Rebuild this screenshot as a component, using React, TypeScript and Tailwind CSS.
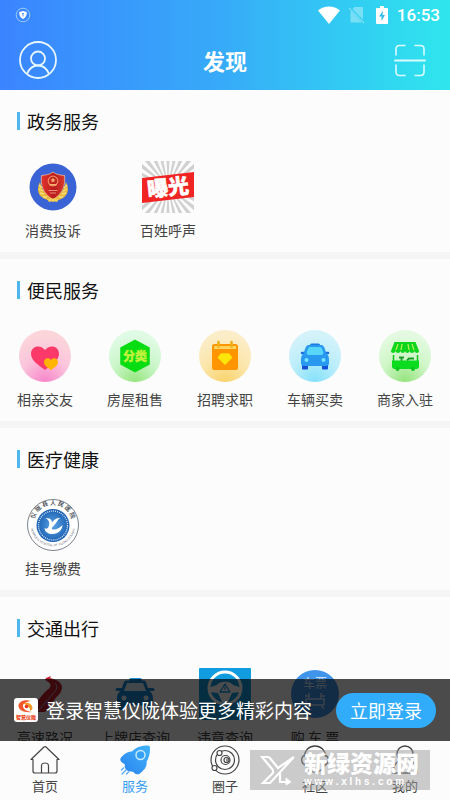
import React, { useState } from 'react';

type TabId = 'home' | 'service' | 'circle' | 'community' | 'mine';

interface Service {
  label: string;
  icon: React.FC;
}

interface Section {
  title: string;
  layout: 'wide' | 'grid';
  items: Service[];
}

const BadgeIcon: React.FC = () => (
  <svg viewBox="0 0 52 52" className="size-[52px]" aria-hidden="true">
    <defs>
      <linearGradient id="shield" x1="0" x2="1">
        <stop offset="0" stopColor="#e2322c" />
        <stop offset="0.55" stopColor="#b81d1c" />
        <stop offset="1" stopColor="#d93a2f" />
      </linearGradient>
    </defs>
    <circle cx="26" cy="26" r="23.5" fill="#3a63d6" />
    <path d="M13 21c-3 6-3 12 3 16 3 2 7 2 10 4 3-2 7-2 10-4 6-4 6-10 3-16-2 8-5 12-13 15-8-3-11-7-13-15z" fill="#e8b93c" />
    <path d="M12 24l3 3M12 28l4 2M13 32l4 1M16 36h4M40 24l-3 3M40 28l-4 2M39 32l-4 1M36 36h-4" stroke="#f8df7a" strokeWidth="1.3" />
    <path d="M26 11c3 2.500 7 3 11.500 3.500 1 9-1 18-11.500 24-10.500-6-12.500-15-11.500-24C19 14 23 13.500 26 11z" fill="url(#shield)" stroke="#f0c9a0" strokeWidth="0.7" />
    <circle cx="26" cy="20" r="4.8" fill="none" stroke="#f08a60" strokeWidth="1.2" />
    <path d="M26 16.500l.8 1.700 1.800.2-1.300 1.200.3 1.800-1.600-.9-1.600.9.300-1.800-1.300-1.200 1.800-.2zM22.500 23h7v1.500h-7z" fill="#f7b070" />
    <path d="M21.500 29.500h9M23 32h6" stroke="#ee9a80" strokeWidth="0.9" />
    <path d="M20 38q6-1 12 0l-2 3q-4-1.500-8 0z" fill="#f3cf55" />
  </svg>
);

const rays = Array.from({ length: 28 }, (_, i) => (i * 360) / 28);

const ExposureIcon: React.FC = () => (
  <svg viewBox="0 0 52 52" className="size-[52px]" aria-hidden="true">
    <defs>
      <clipPath id="rayBox">
        <rect width="52" height="52" rx="3" />
      </clipPath>
    </defs>
    <g clipPath="url(#rayBox)" fill="#d0d0d0">
      {rays.map((angle) => (
        <path key={angle} d="M26 26L23.8 -14h4.4z" transform={`rotate(${angle} 26 26)`} />
      ))}
    </g>
    <path d="M0 17L52 11v25L0 42z" fill="#f02523" />
    <text
      x="26"
      y="34"
      textAnchor="middle"
      transform="rotate(-6 26 26)"
      className="font-['Noto_Sans_CJK_SC',sans-serif] text-[21px] font-black"
      fill="#fff"
      stroke="#fff"
      strokeWidth="0.5"
    >
      曝光
    </text>
  </svg>
);

const HeartIcon: React.FC = () => (
  <svg viewBox="0 0 52 52" className="size-[52px]" aria-hidden="true">
    <defs>
      <radialGradient id="pink" cx="0.5" cy="1" r="0.9">
        <stop offset="0" stopColor="#f685ca" />
        <stop offset="0.55" stopColor="#fbc5dc" />
        <stop offset="1" stopColor="#fbd5da" />
      </radialGradient>
    </defs>
    <circle cx="26" cy="26" r="26" fill="url(#pink)" />
    <path d="M26 40C19 35 12 30 12 24c0-8 9-10 14-4 5-6 14-4 14 4 0 6-7 11-14 16z" fill="#fb3a69" />
    <path d="M32 40c-4-2.500-7-5-7-8 0-4 5-5 7-2 2-3 7-2 7 2 0 3-3 5.500-7 8z" fill="#ffb400" />
  </svg>
);

const CategoryIcon: React.FC = () => (
  <svg viewBox="0 0 52 52" className="size-[52px]" aria-hidden="true">
    <defs>
      <radialGradient id="mint" cx="0.5" cy="1" r="0.9">
        <stop offset="0" stopColor="#96e57e" />
        <stop offset="0.55" stopColor="#ccf6cb" />
        <stop offset="1" stopColor="#e0fbe5" />
      </radialGradient>
    </defs>
    <circle cx="26" cy="26" r="26" fill="url(#mint)" />
    <path d="M26 10.5L40 18v16L26 41.5 12 34V18z" fill="#08dc13" stroke="#08dc13" strokeWidth="1.5" strokeLinejoin="round" />
    <text
      x="26"
      y="30.5"
      textAnchor="middle"
      className="font-['Noto_Sans_CJK_SC',sans-serif] text-[12px] font-black"
      fill="#bdf23a"
      stroke="#bdf23a"
      strokeWidth="0.4"
    >
      分类
    </text>
  </svg>
);

const JobIcon: React.FC = () => (
  <svg viewBox="0 0 52 52" className="size-[52px]" aria-hidden="true">
    <defs>
      <radialGradient id="sand" cx="0.5" cy="1" r="0.9">
        <stop offset="0" stopColor="#f9d36c" />
        <stop offset="0.55" stopColor="#fbe6ac" />
        <stop offset="1" stopColor="#fbedc8" />
      </radialGradient>
    </defs>
    <circle cx="26" cy="26" r="26" fill="url(#sand)" />
    <rect x="13" y="14" width="26" height="26" rx="2.5" fill="#ff9500" />
    <path d="M15 16h22v3H15z" fill="#ffd45c" />
    <path d="M19.500 12v4.500M32.500 12v4.500" stroke="#eeb01a" strokeWidth="2.6" strokeLinecap="round" />
    <path d="M22.500 24h7l3 3.500-6.500 6.500-6.500-6.500z" fill="#ffe60a" stroke="#ffe60a" strokeWidth="1.5" strokeLinejoin="round" />
  </svg>
);

const CarIcon: React.FC = () => (
  <svg viewBox="0 0 52 52" className="size-[52px]" aria-hidden="true">
    <defs>
      <radialGradient id="sky" cx="0.5" cy="1" r="0.9">
        <stop offset="0" stopColor="#84e1fb" />
        <stop offset="0.55" stopColor="#bceefb" />
        <stop offset="1" stopColor="#d3f2fa" />
      </radialGradient>
    </defs>
    <circle cx="26" cy="26" r="26" fill="url(#sky)" />
    <rect x="13" y="33" width="6" height="6.5" rx="1" fill="#1450d8" />
    <rect x="33" y="33" width="6" height="6.5" rx="1" fill="#1450d8" />
    <rect x="21" y="13.5" width="10" height="4" rx="1.5" fill="#1d7be0" />
    <path d="M13 23h4M35 23h4" stroke="#1d6fe0" strokeWidth="2.5" strokeLinecap="round" />
    <path d="M19.500 15h13c2 0 3.500 3 4.500 8 2.500 2 3 4 3 7v3c0 2-1 3-3 3H15c-2 0-3-1-3-3v-3c0-3 .5-5 3-7 1-5 2.500-8 4.500-8z" fill="#2899ee" />
    <path d="M21 17h10c1.200 0 2.500 2 3.200 5.200.2 1.800-.4 2.800-1.700 2.800h-13c-1.300 0-1.900-1-1.700-2.800.7-3.200 2-5.200 3.200-5.200z" fill="#58d6fa" />
    <circle cx="17.5" cy="30" r="2" fill="#75e4fc" />
    <circle cx="34.5" cy="30" r="2" fill="#75e4fc" />
  </svg>
);

const ShopIcon: React.FC = () => (
  <svg viewBox="0 0 52 52" className="size-[52px]" aria-hidden="true">
    <defs>
      <radialGradient id="leaf" cx="0.5" cy="1" r="0.9">
        <stop offset="0" stopColor="#94e37c" />
        <stop offset="0.55" stopColor="#d0f6c9" />
        <stop offset="1" stopColor="#e3fae0" />
      </radialGradient>
    </defs>
    <circle cx="26" cy="26" r="26" fill="url(#leaf)" />
    <path d="M15.500 12h21l3.500 9c0 2.500-4 2.500-4.500 0-.5 2.500-4.500 2.500-5 0-.5 2.500-4 2.500-4.500 0-.5 2.500-4 2.500-4.500 0-.5 2.500-4.500 2.500-5 0-.5 2.500-4.500 2.500-4.500 0z" fill="#0bd51c" />
    <path d="M19 14l-2 6M23 14l-1 6M29 14l1 6M33 14l2 6" stroke="#a5f04c" strokeWidth="1.4" />
    <path d="M14.500 25v6M38.500 25v6" stroke="#0bc41c" strokeWidth="1.5" />
    <path d="M20 27.500h5M22.500 28v3M28 30.500l2-2h5" stroke="#199b2c" strokeWidth="1.8" fill="none" />
    <path d="M13 30.500h27v6c0 1.500-1 2.500-2.500 2.500h-22c-1.500 0-2.500-1-2.500-2.500z" fill="#0bdc20" />
    <circle cx="18.5" cy="39" r="2" fill="#0bc41c" />
    <circle cx="34" cy="39" r="2" fill="#0bc41c" />
  </svg>
);

const HospitalIcon: React.FC = () => (
  <svg viewBox="0 0 52 52" className="size-[52px]" aria-hidden="true">
    <defs>
      <path id="ringTop" d="M7.500 29a19 19 0 1 1 37 0" />
      <path id="ringBottom" d="M3.500 29a23 23 0 0 0 45 0" />
      <radialGradient id="hospital">
        <stop offset="0" stopColor="#5aa3e6" />
        <stop offset="1" stopColor="#1b60b2" />
      </radialGradient>
    </defs>
    <circle cx="26" cy="26" r="25.5" fill="#fff" stroke="#6d7480" strokeWidth="0.9" />
    <text className="font-['Noto_Sans_CJK_SC',sans-serif] text-[6px] font-medium" fill="#343a44">
      <textPath href="#ringTop" startOffset="50%" textAnchor="middle">
        仪 陇 县 人 民 医 院
      </textPath>
    </text>
    <text className="font-['Liberation_Sans',sans-serif] text-[3px]" fill="#5a6270">
      <textPath href="#ringBottom" startOffset="50%" textAnchor="middle">
        PEOPLE'S HOSPITAL OF YILONG COUNTY
      </textPath>
    </text>
    <circle cx="26" cy="26.5" r="16.5" fill="url(#hospital)" />
    <circle cx="26" cy="26.5" r="14.5" fill="none" stroke="#d7e8f8" strokeWidth="1.3" strokeDasharray="1 1" />
    <path d="M18.500 19.500c4-1 6.500 1 6.500 4 2-3 5-5 8.500-4.500-3 1-3.500 5-8 9-1.500 1.500-.5 3 2 2.500 3-.5 5.500-2 8-4.500-.5 5.500-4.500 9-9.500 9s-8-2-8.500-6c1.500 1 3 1 4-1 .7-2 1-3.500.5-5-.5-1.700-1.500-3-3.500-3.500z" fill="#fff" />
  </svg>
);

const RoadIcon: React.FC = () => (
  <svg viewBox="0 0 52 52" className="size-[52px]" aria-hidden="true">
    <path d="M27 10l5-2-1 2c5 1 12 4 12 9 0 6-4 8-7 12L26 44H9l16-19c4-4 8-6 6-9-1-2-3-3-5-4z" fill="#c4202e" />
    <path d="M36 15c4 4 1 8-4 13L19 43" stroke="#a8a8b4" strokeWidth="1" fill="none" />
  </svg>
);

const PlateIcon: React.FC = () => (
  <svg viewBox="0 0 52 52" className="size-[52px]" aria-hidden="true">
    <rect x="20" y="10" width="13" height="5" rx="2" fill="#168bd6" />
    <path d="M17 12.500h18c2 0 3.500 5 4.500 10 3.500 2 4.500 4.500 4.500 8v7H8v-7c0-3.500 1-6 4.500-8 1-5 2.500-10 4.500-10z" fill="#168bd6" />
    <path d="M8 21.500h5M39 21.500h5" stroke="#168bd6" strokeWidth="3" strokeLinecap="round" />
    <path d="M18 15h16l3 8H15z" fill="#d9effb" />
    <circle cx="15" cy="30" r="2.5" fill="#d9effb" />
    <circle cx="37" cy="30" r="2.5" fill="#d9effb" />
    <path d="M10 37h7v5h-7zM35 37h7v5h-7z" fill="#168bd6" />
  </svg>
);

const WheelIcon: React.FC = () => (
  <svg viewBox="0 0 52 52" className="size-[52px]" aria-hidden="true">
    <rect width="52" height="52" rx="1" fill="#129ce0" />
    <circle cx="26" cy="20" r="16" fill="none" stroke="#fff" strokeWidth="3" />
    <path d="M10 20c3-2 7-2 9-4 3-3 11-3 14 0 2 2 6 2 9 4l-1 4-8 1-4 9h-6l-4-9-8-1z" fill="#fff" />
    <path d="M26 16l5 8H21z" fill="none" stroke="#129ce0" strokeWidth="1.3" strokeLinejoin="round" />
    <path d="M26 19v3" stroke="#129ce0" strokeWidth="1.2" />
  </svg>
);

const TicketIcon: React.FC = () => (
  <svg viewBox="0 0 52 52" className="size-[52px]" aria-hidden="true">
    <circle cx="26" cy="26" r="24" fill="#4095ea" />
    <text x="26" y="20" textAnchor="middle" className="font-['Noto_Sans_CJK_SC',sans-serif] text-[12px] font-medium" fill="#c4def9">
      车票
    </text>
    <path d="M17 31h18v6H17zM20 25v6M32 25v6M16 28h5M31 28h5M20 37l-3 4M32 37l3 4" fill="none" stroke="#a9cef5" strokeWidth="1.8" />
  </svg>
);

const sections: Section[] = [
  {
    title: '政务服务',
    layout: 'wide',
    items: [
      { label: '消费投诉', icon: BadgeIcon },
      { label: '百姓呼声', icon: ExposureIcon },
    ],
  },
  {
    title: '便民服务',
    layout: 'grid',
    items: [
      { label: '相亲交友', icon: HeartIcon },
      { label: '房屋租售', icon: CategoryIcon },
      { label: '招聘求职', icon: JobIcon },
      { label: '车辆买卖', icon: CarIcon },
      { label: '商家入驻', icon: ShopIcon },
    ],
  },
  {
    title: '医疗健康',
    layout: 'wide',
    items: [{ label: '挂号缴费', icon: HospitalIcon }],
  },
  {
    title: '交通出行',
    layout: 'grid',
    items: [
      { label: '高速路况', icon: RoadIcon },
      { label: '上牌店查询', icon: PlateIcon },
      { label: '违章查询', icon: WheelIcon },
      { label: '购 车 票', icon: TicketIcon },
    ],
  },
];

const HomeTab: React.FC = () => (
  <svg viewBox="0 0 30 30" className="size-[30px]" fill="none" stroke="currentColor" strokeWidth="1.2" strokeLinejoin="round" aria-hidden="true">
    <path d="M1 14.500L14 2c.7-.6 1.300-.6 2 0l13 12.500h-2V26c0 1.200-.8 2-2 2H5c-1.200 0-2-.8-2-2V14.500z" />
    <path d="M11.500 28v-7c0-4 7-4 7 0v7" />
  </svg>
);

const RocketTab: React.FC = () => (
  <svg viewBox="0 0 30 30" className="size-[30px]" aria-hidden="true">
    <defs>
      <linearGradient id="rocket" x1="0" y1="1" x2="1" y2="0">
        <stop offset="0" stopColor="#2a82ef" />
        <stop offset="1" stopColor="#41b4fa" />
      </linearGradient>
    </defs>
    <path
      d="M28 .5c1.200 0 2 .8 2 2 .3 5.500-1 10.500-3.500 14.500 1 4-2 8-6.500 11.500-1.500 1-3 1-4.500.5-1-1.200-2-2-3.500-2.500-2.500.2-4.500-.5-6-2-1.300-1.500-1.700-3-1-5C3 18.500 1 17 .5 15.500 0 14 .5 13 2 11.500 5 8 8.500 6.500 12 6.500 16 2 22 .5 28 .5z"
      fill="url(#rocket)"
    />
    <circle cx="20.5" cy="10" r="4.5" fill="#36a0f5" stroke="#c8ecff" strokeWidth="1.5" />
    <path d="M3.500 23l-2 2M6 25l-4 4M8.500 27l-2 2" stroke="#52a8f4" strokeWidth="1.3" strokeLinecap="round" />
  </svg>
);

const CircleTab: React.FC = () => (
  <svg viewBox="0 0 30 30" className="size-[30px]" fill="none" stroke="currentColor" strokeWidth="1.2" aria-hidden="true">
    <circle cx="15" cy="15" r="14" />
    <circle cx="15" cy="15" r="9.5" />
    <circle cx="15.5" cy="15" r="4.5" />
    <circle cx="16.5" cy="15" r="2.5" />
    <path d="M17 13.500v3" />
    <circle cx="9.5" cy="8" r="2.5" fill="#fcfcfc" />
    <circle cx="4.5" cy="23" r="2.5" fill="#fcfcfc" />
  </svg>
);

const CommunityTab: React.FC = () => (
  <svg viewBox="0 0 30 30" className="size-[30px]" fill="none" stroke="currentColor" strokeWidth="1.4" strokeLinecap="round" aria-hidden="true">
    <path d="M4.500 11C5 5 9 1 15 1s10 4 10.500 10" />
    <path d="M5 10c-4.500 2-4.500 8 0 10M25 10c4.500 2 4.500 8 0 10" />
    <path d="M5 20c2 4 5.500 7 10 7s8-3 10-7" />
  </svg>
);

const MineTab: React.FC = () => (
  <svg viewBox="0 0 30 30" className="size-[30px]" fill="none" stroke="currentColor" strokeWidth="1.4" strokeLinecap="round" aria-hidden="true">
    <circle cx="15" cy="9" r="8" />
    <path d="M9.500 15.500C5 18 3 22 3 28h24c0-6-2-10-6.500-12.500" />
  </svg>
);

const tabs: { id: TabId; label: string; icon: React.FC }[] = [
  { id: 'home', label: '首页', icon: HomeTab },
  { id: 'service', label: '服务', icon: RocketTab },
  { id: 'circle', label: '圈子', icon: CircleTab },
  { id: 'community', label: '社区', icon: CommunityTab },
  { id: 'mine', label: '我的', icon: MineTab },
];

const StatusBar: React.FC = () => (
  <div className="flex h-[30px] items-center justify-between pl-[15px] pr-[10px]">
    <svg viewBox="0 0 16 16" className="size-4" aria-hidden="true">
      <circle cx="8" cy="8" r="6.8" fill="none" stroke="#a3d0ff" strokeWidth="0.9" />
      <path d="M8 4l3.800 1c.2 3-.8 5.500-3.800 7-3-1.500-4-4-3.800-7z" fill="#fff" />
      <path d="M8 6v3.500M7.200 6.500h1.600" stroke="#4a93f5" strokeWidth="1" />
    </svg>
    <div className="flex items-center">
      <svg viewBox="0 0 22 18" className="mr-2 h-[18px] w-[22px]" aria-hidden="true">
        <path d="M11 18L0 4.500C6 -.8 16 -.8 22 4.500z" fill="#fff" />
      </svg>
      <svg viewBox="0 0 18 18" className="mr-[10px] size-[18px]" aria-hidden="true">
        <path d="M6.500 1H15v12.500L4.500 3zM2.500 4.500L14 16.500H2.500z" fill="#fff" opacity="0.35" />
        <path d="M1 2l15 15" stroke="#fff" strokeWidth="1.2" opacity="0.35" />
      </svg>
      <svg viewBox="0 0 12 18" className="mr-[9px] h-[18px] w-3" aria-hidden="true">
        <path d="M4 0h4v2h3c.6 0 1 .4 1 1v14c0 .6-.4 1-1 1H1c-.6 0-1-.4-1-1V3c0-.6.4-1 1-1h3z" fill="#fff" />
        <path d="M7 4.500L3 10.500h2.500V15L9 9H6.500z" fill="#35bdf0" />
      </svg>
      <span className="font-[Roboto,sans-serif] text-[17px] font-medium leading-5">16:53</span>
    </div>
  </div>
);

const Header: React.FC = () => (
  <header className="shrink-0 bg-linear-to-r from-[#3b84ff] via-[#37abf8] to-[#2fe6ec] text-white">
    <StatusBar />
    <div className="flex h-[60px] items-center justify-between px-[18px]">
      <button type="button" aria-label="个人中心">
        <svg viewBox="0 0 40 40" className="size-10" fill="none" stroke="#e6f6ff" strokeWidth="1.8" aria-hidden="true">
          <circle cx="20" cy="20" r="18" />
          <circle cx="20" cy="18.5" r="7" />
          <path d="M9 34c2-5 6-8.500 11-8.500S29 29 31 34" />
        </svg>
      </button>
      <h1 className="text-[22px] font-bold leading-8">发现</h1>
      <button type="button" aria-label="扫一扫" className="pr-1">
        <svg viewBox="0 0 36 36" className="size-9" fill="none" stroke="#d9fbff" strokeWidth="1.6" strokeLinecap="round" aria-hidden="true">
          <path d="M4 13V7c0-2 1-3.500 3.500-3.500H13M23 3.500h5.500C31 3.500 32 5 32 7v6M32 23v7c0 2-1 3.500-3.500 3.500H23M13 33.500H7.500C5 33.500 4 32 4 30v-7" />
          <path d="M3 18.500h30" strokeWidth="2" />
        </svg>
      </button>
    </div>
  </header>
);

const ServiceSection: React.FC<{ section: Section }> = ({ section }) => (
  <section className="border-b-[7px] border-[#f5f5f5] pb-3 pt-[15px]">
    <h2 className="flex items-center gap-[7px] pl-[17px] text-lg leading-8 text-[#111]">
      <span className="h-[18px] w-[3px] bg-[#4eb7ee]" />
      {section.title}
    </h2>
    <ul className={section.layout === 'grid' ? 'mt-6 grid grid-cols-5' : 'mt-6 flex gap-[59px] px-[25px]'}>
      {section.items.map(({ label, icon: Icon }) => (
        <li key={label} className="flex justify-center">
          <button type="button" className="flex flex-col items-center gap-[7px] whitespace-nowrap text-sm leading-5 text-[#444]">
            <Icon />
            {label}
          </button>
        </li>
      ))}
    </ul>
  </section>
);

const LoginBanner: React.FC = () => (
  <div className="absolute inset-x-0 bottom-0 flex h-[62px] items-center bg-black/70 px-[14px] text-white">
    <svg viewBox="0 0 24 24" className="mr-2 size-6 shrink-0" aria-hidden="true">
      <rect width="24" height="24" rx="3" fill="#fff" />
      <path d="M17 3C10 1 4 4 4.500 8.500 5 12 10 15 18 14c-5-.5-9-2.500-9-6 0-2.500 3-4.500 8-5z" fill="#f0562b" />
      <path d="M9 5.500c4-2 9 0 9.500 4 0 2-1 3-2.500 3.500.5-3-2-5.500-7-7.500z" fill="#f59a2a" />
      <circle cx="12.5" cy="8.5" r="1.8" fill="#e8321f" />
      <text x="12" y="21" textAnchor="middle" className="font-['Noto_Sans_CJK_SC',sans-serif] text-[5px] font-black" fill="#ea4a26">
        智慧仪陇
      </text>
    </svg>
    <p className="whitespace-nowrap text-[19px] leading-7">登录智慧仪陇体验更多精彩内容</p>
    <button type="button" className="ml-auto h-[35px] shrink-0 rounded-full bg-[#31acfa] px-[14px] text-lg leading-7">
      立即登录
    </button>
  </div>
);

const Watermark: React.FC = () => (
  <div className="pointer-events-none absolute bottom-[10px] right-5 flex h-10 w-[180px] items-center gap-2 bg-[#999]/50 pl-[10px] text-white">
    <svg viewBox="0 0 36 32" className="h-8 w-9 shrink-0" fill="none" stroke="#fff" strokeWidth="2.2" aria-hidden="true">
      <path d="M9 3H2l11 13M9 3l9 11L34 3M13 16v3L3 29h7L33 4" />
      <path d="M20 19v9h9" />
      <path d="M26 24l5 4-5 3z" fill="#fff" strokeWidth="0.8" />
    </svg>
    <div className="whitespace-nowrap">
      <p className="text-[23px] font-black leading-6">新绿资源网</p>
      <p className="font-['Liberation_Sans',sans-serif] text-[10px] font-bold leading-4">w w w . x l h s . c o m</p>
    </div>
  </div>
);

const App: React.FC = () => {
  const [activeTab, setActiveTab] = useState<TabId>('service');

  return (
    <div className="flex h-screen flex-col bg-[#fcfcfc] font-['Noto_Sans_CJK_SC',sans-serif]">
      <Header />

      <div className="relative min-h-0 flex-1">
        <main className="h-full overflow-hidden">
          {sections.map((section) => (
            <ServiceSection key={section.title} section={section} />
          ))}
        </main>
        <LoginBanner />
      </div>

      <nav className="relative shrink-0">
        <div className="grid h-[59px] grid-cols-5">
          {tabs.map(({ id, label, icon: Icon }) => (
            <button
              key={id}
              type="button"
              onClick={() => setActiveTab(id)}
              className={`flex flex-col items-center pt-1 text-[13px] leading-[21px] ${
                activeTab === id ? 'text-[#379df2]' : 'text-[#444]'
              }`}
            >
              <Icon />
              {label}
            </button>
          ))}
        </div>
        <Watermark />
      </nav>
    </div>
  );
};

export default App;
